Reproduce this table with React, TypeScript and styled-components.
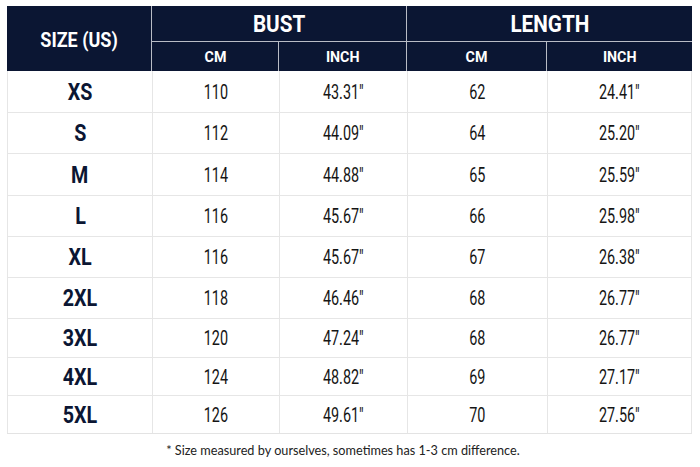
import styled, { createGlobalStyle } from "styled-components";

const GlobalStyle = createGlobalStyle`
  html, body {
    margin: 0;
    padding: 0;
    background: #ffffff;
  }
`;

const rows = [
  { size: "XS", bustCm: "110", bustIn: "43.31″", lenCm: "62", lenIn: "24.41″", h: 42 },
  { size: "S", bustCm: "112", bustIn: "44.09″", lenCm: "64", lenIn: "25.20″", h: 41 },
  { size: "M", bustCm: "114", bustIn: "44.88″", lenCm: "65", lenIn: "25.59″", h: 42 },
  { size: "L", bustCm: "116", bustIn: "45.67″", lenCm: "66", lenIn: "25.98″", h: 41 },
  { size: "XL", bustCm: "116", bustIn: "45.67″", lenCm: "67", lenIn: "26.38″", h: 41 },
  { size: "2XL", bustCm: "118", bustIn: "46.46″", lenCm: "68", lenIn: "26.77″", h: 41 },
  { size: "3XL", bustCm: "120", bustIn: "47.24″", lenCm: "68", lenIn: "26.77″", h: 39 },
  { size: "4XL", bustCm: "124", bustIn: "48.82″", lenCm: "69", lenIn: "27.17″", h: 38 },
  { size: "5XL", bustCm: "126", bustIn: "49.61″", lenCm: "70", lenIn: "27.56″", h: 37 },
];

export default function App() {
  return (
    <>
      <GlobalStyle />
      <Page>
        <Table>
          <HeadGrid>
            <SizeHead>
              <Narrow $scale={0.9}>SIZE (US)</Narrow>
            </SizeHead>
            <GroupHead $col={2}>
              <Narrow $scale={0.9}>BUST</Narrow>
            </GroupHead>
            <GroupHead $col={4}>
              <Narrow $scale={0.9}>LENGTH</Narrow>
            </GroupHead>
            <SubHead $col={2}>
              <Narrow $scale={0.95}>CM</Narrow>
            </SubHead>
            <SubHead $col={3}>
              <Narrow $scale={0.95}>INCH</Narrow>
            </SubHead>
            <SubHead $col={4}>
              <Narrow $scale={0.95}>CM</Narrow>
            </SubHead>
            <SubHead $col={5} $last>
              <Narrow $scale={0.95}>INCH</Narrow>
            </SubHead>
          </HeadGrid>
          {rows.map((r) => (
            <Row key={r.size} $h={r.h}>
              <SizeCell>
                <Narrow $scale={0.82}>{r.size}</Narrow>
              </SizeCell>
              <Cell>
                <Narrow $scale={0.72}>{r.bustCm}</Narrow>
              </Cell>
              <Cell>
                <Narrow $scale={0.72}>{r.bustIn}</Narrow>
              </Cell>
              <Cell>
                <Narrow $scale={0.72}>{r.lenCm}</Narrow>
              </Cell>
              <Cell $last>
                <Narrow $scale={0.72}>{r.lenIn}</Narrow>
              </Cell>
            </Row>
          ))}
        </Table>
        <Note>* Size measured by ourselves, sometimes has 1-3 cm difference.</Note>
      </Page>
    </>
  );
}

const cols = "145px 127px 128px 140px 145px";

const Page = styled.div`
  width: 700px;
  height: 467px;
  padding: 6px 0 0 7px;
  box-sizing: border-box;
`;

const Table = styled.div`
  width: 685px;
  border: 1px solid #e3e3e3;
  border-top: none;
  box-sizing: border-box;
`;

// Roboto squeezed sideways stands in for the condensed face of the chart
const Narrow = styled.span<{ $scale: number }>`
  display: inline-block;
  white-space: nowrap;
  transform: scaleX(${(p) => p.$scale});
  transform-origin: center;
`;

const HeadGrid = styled.div`
  display: grid;
  grid-template-columns: ${cols};
  grid-template-rows: 36px 29px;
  background: #0b1633;
  margin: 0 -1px;
  color: #ffffff;
  font-family: "Roboto", "Liberation Sans", sans-serif;
  font-weight: 700;
`;

const SizeHead = styled.div`
  grid-column: 1;
  grid-row: 1 / span 2;
  display: flex;
  align-items: center;
  justify-content: center;
  font-size: 20px;
  padding-top: 2px;
  border-right: 1px solid #b9bcc6;
`;

const GroupHead = styled.div<{ $col: number }>`
  grid-column: ${(p) => p.$col} / span 2;
  grid-row: 1;
  display: flex;
  align-items: center;
  justify-content: center;
  font-size: 23px;
  padding-top: 1px;
  border-bottom: 1px solid #b9bcc6;
  border-right: ${(p) => (p.$col === 2 ? "1px solid #b9bcc6" : "none")};
`;

const SubHead = styled.div<{ $col: number; $last?: boolean }>`
  grid-column: ${(p) => p.$col};
  grid-row: 2;
  display: flex;
  align-items: center;
  justify-content: center;
  font-size: 15px;
  padding-top: 1px;
  border-right: ${(p) => (p.$last ? "none" : "1px solid #b9bcc6")};
`;

const Row = styled.div<{ $h: number }>`
  display: grid;
  grid-template-columns: ${cols};
  height: ${(p) => p.$h}px;
  border-bottom: 1px solid #e6e6e6;
  box-sizing: border-box;
  margin: 0 -1px;
  &:last-child {
    border-bottom: none;
  }
`;

const Cell = styled.div<{ $last?: boolean }>`
  display: flex;
  align-items: center;
  justify-content: center;
  font-family: "Roboto", "Liberation Sans", sans-serif;
  font-size: 20px;
  color: #151515;
  border-left: 1px solid #e6e6e6;
  border-right: ${(p) => (p.$last ? "1px solid #e6e6e6" : "none")};
`;

const SizeCell = styled(Cell)`
  font-weight: 700;
  font-size: 24px;
  color: #0b1633;
`;

const Note = styled.div`
  width: 686px;
  margin-top: 8px;
  padding-right: 14px;
  box-sizing: border-box;
  text-align: center;
  font-family: "Lato", "Noto Sans", sans-serif;
  font-size: 12.7px;
  color: #222222;
`;
